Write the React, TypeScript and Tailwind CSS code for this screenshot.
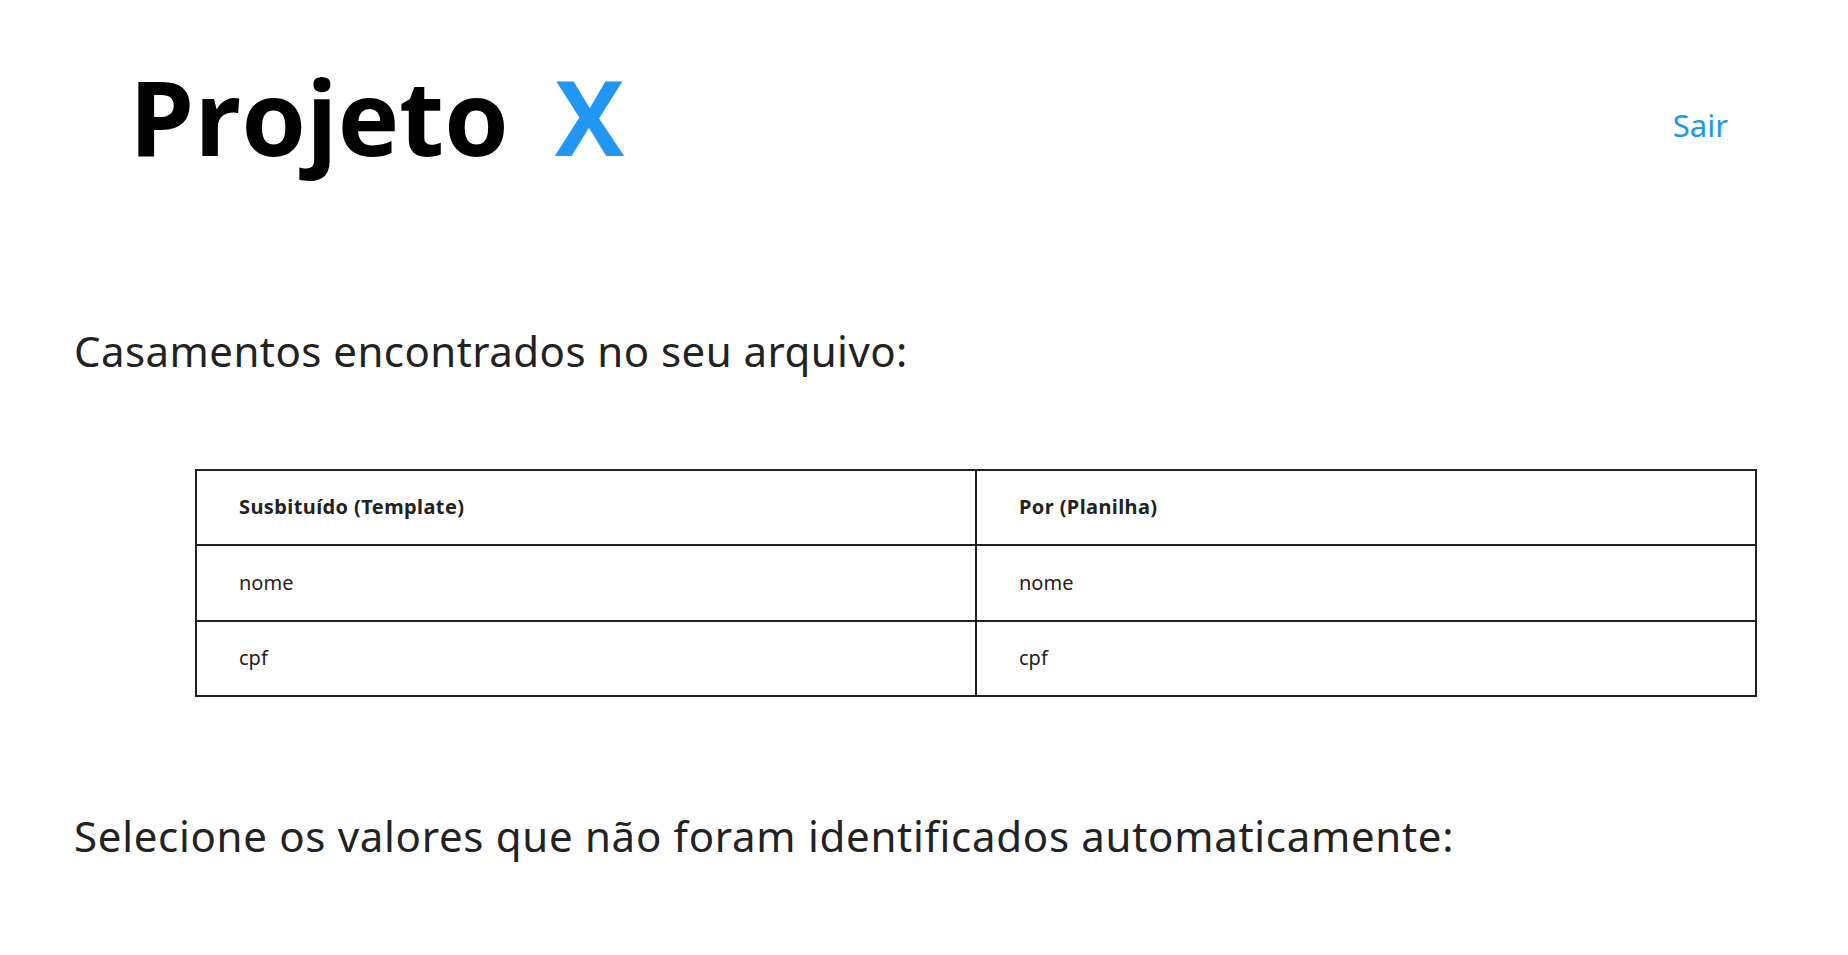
import React from "react";

export default function App() {
  const body = { fontFamily: '"Noto Sans", "Open Sans", sans-serif' };
  return (
    <div className="min-h-[955px] w-full bg-white text-[#222]" style={body}>
      <header className="flex items-start justify-between pl-[129px] pr-[120px] pt-[48px]">
        <h1
          className="flex items-baseline gap-[46px] text-[104px] font-bold leading-[1.3] text-black"
          style={{ fontFamily: '"Open Sans", sans-serif' }}
        >
          <span>Projeto</span>
          <span className="text-[#2196f3]">X</span>
        </h1>
        <a href="#" className="mt-[62px] text-[31px] leading-none text-[#1a9ae6]">
          Sair
        </a>
      </header>

      <main className="px-[74px] pt-[143px]">
        <h2 className="text-[42px] leading-[1.2] tracking-[0.45px]">Casamentos encontrados no seu arquivo:</h2>

        <div className="ml-[121px] mr-[17px] mt-[92px]">
          <table className="w-full border-collapse border-2 border-[#222] text-[20px]">
            <thead>
              <tr className="h-[75px]">
                <th className="w-1/2 border-2 border-[#222] pl-[42px] text-left font-bold tracking-[0.4px]">
                  Susbituído (Template)
                </th>
                <th className="border-2 border-[#222] pl-[42px] text-left font-bold tracking-[0.4px]">
                  Por (Planilha)
                </th>
              </tr>
            </thead>
            <tbody>
              <tr className="h-[76px]">
                <td className="border-2 border-[#222] pl-[42px]">nome</td>
                <td className="border-2 border-[#222] pl-[42px]">nome</td>
              </tr>
              <tr className="h-[75px]">
                <td className="border-2 border-[#222] pl-[42px]">cpf</td>
                <td className="border-2 border-[#222] pl-[42px]">cpf</td>
              </tr>
            </tbody>
          </table>
        </div>

        <h2 className="mt-[114px] text-[42px] leading-[1.2] tracking-[0.7px]">
          Selecione os valores que não foram identificados automaticamente:
        </h2>
      </main>
    </div>
  );
}
